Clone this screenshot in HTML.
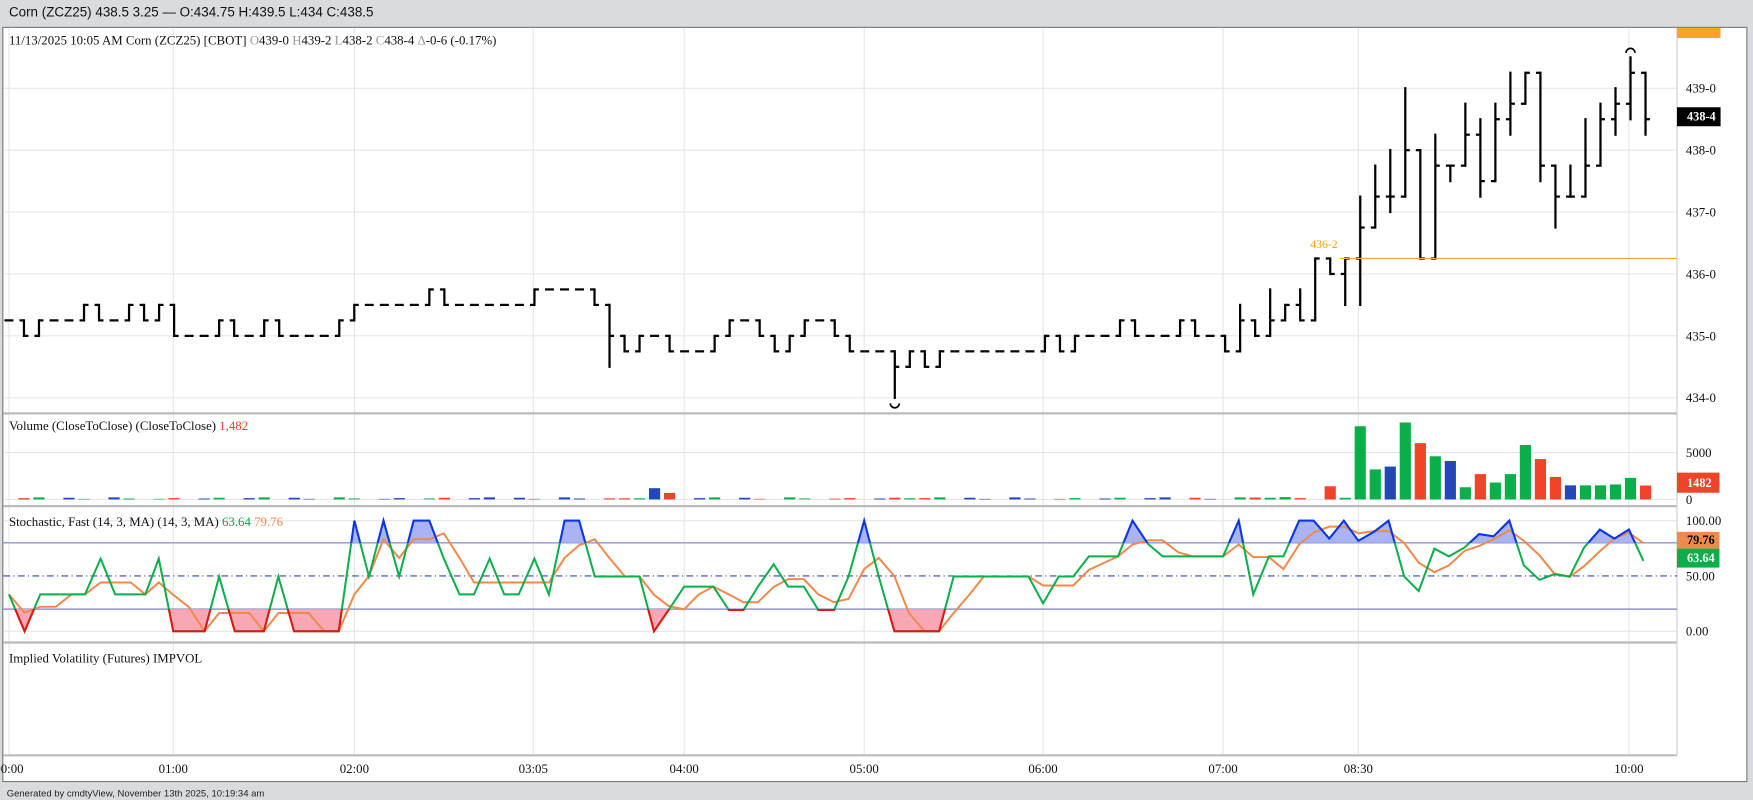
<!DOCTYPE html>
<html><head><meta charset="utf-8"><style>
html,body{margin:0;padding:0;background:#d9dcdf;overflow:hidden}
svg{display:block}
.s{font-family:"Liberation Serif",serif;font-size:11.5px;fill:#111}
</style></head><body>
<svg id="c" width="1753" height="800" viewBox="0 0 1568 716" preserveAspectRatio="none" xmlns="http://www.w3.org/2000/svg">
<rect x="0" y="0" width="1568" height="716" fill="#d9dcdf"/>
<text x="8" y="15" font-family="Liberation Sans,sans-serif" font-size="12" fill="#111">Corn (ZCZ25) 438.5 3.25 — O:434.75 H:439.5 L:434 C:438.5</text>
<rect x="2.5" y="24.5" width="1560" height="675" fill="#fff" stroke="#777" stroke-width="1"/>
<g id="grid"></g>
<g id="main"></g>
<text x="8" y="40" class="s" font-size="12">11/13/2025  10:05 AM Corn (ZCZ25) [CBOT] <tspan fill="#999">O</tspan>439-0 <tspan fill="#999">H</tspan>439-2 <tspan fill="#999">L</tspan>438-2 <tspan fill="#999">C</tspan>438-4 <tspan fill="#999">Δ</tspan>-0-6 (-0.17%)</text>
<text x="8" y="385" class="s" font-size="12">Volume (CloseToClose)  (CloseToClose) <tspan fill="#e8432a">1,482</tspan></text>
<text x="8" y="471" class="s" font-size="12">Stochastic, Fast (14, 3, MA)  (14, 3, MA) <tspan fill="#0aa24a">63.64</tspan> <tspan fill="#f08a4b">79.76</tspan></text>
<text x="8" y="593" class="s" font-size="12">Implied Volatility (Futures)  IMPVOL</text>
<text x="6" y="713" font-family="Liberation Sans,sans-serif" font-size="8.5" fill="#222">Generated by cmdtyView, November 13th 2025, 10:19:34 am</text>
</svg>
<script>
const NS="http://www.w3.org/2000/svg";
const G=document.getElementById('grid'),M=document.getElementById('main');
function el(p,t,a,txt){const e=document.createElementNS(NS,t);for(const k in a)e.setAttribute(k,a[k]);if(txt!=null)e.textContent=txt;p.appendChild(e);return e;}
const AX=1500;
const tl=[[8,"00:00"],[155,"01:00"],[317,"02:00"],[477,"03:05"],[612,"04:00"],[773,"05:00"],[933,"06:00"],[1094,"07:00"],[1215,"08:30"],[1457,"10:00"]];
tl.forEach(([x,t])=>{el(G,'line',{x1:x,y1:25,x2:x,y2:676,stroke:'#e6e6e6','stroke-width':1});el(G,'text',{x:x,y:692,'text-anchor':'middle',class:'s'},t);});
const py=p=>79+(439-p)*55.4;
[439,438,437,436,435,434].forEach(p=>{el(G,'line',{x1:3,y1:py(p),x2:AX,y2:py(p),stroke:'#e6e6e6'});el(G,'text',{x:AX+8,y:py(p)+4,class:'s'},p+"-0");});
[[370],[453],[575],[676]].forEach(([y])=>{el(G,'line',{x1:3,y1:y,x2:AX,y2:y,stroke:'#bbb','stroke-width':2});});
el(G,'line',{x1:AX,y1:25,x2:AX,y2:676,stroke:'#ccc'});
const vy=v=>447-v*42/5000;
el(G,'line',{x1:3,y1:vy(5000),x2:AX,y2:vy(5000),stroke:'#e6e6e6'});el(G,'line',{x1:3,y1:447,x2:AX,y2:447,stroke:'#e6e6e6'});
el(G,'text',{x:AX+8,y:vy(5000)+4,class:'s'},"5000");el(G,'text',{x:AX+8,y:451,class:'s'},"0");
const sy=v=>565-v*0.99;
el(G,'line',{x1:3,y1:sy(100),x2:AX,y2:sy(100),stroke:'#e6e6e6'});el(G,'line',{x1:3,y1:sy(0),x2:AX,y2:sy(0),stroke:'#e6e6e6'});
el(G,'line',{x1:3,y1:sy(80),x2:AX,y2:sy(80),stroke:'#8e93cc','stroke-width':1.3});
el(G,'line',{x1:3,y1:sy(20),x2:AX,y2:sy(20),stroke:'#8e93cc','stroke-width':1.3});
el(G,'line',{x1:3,y1:sy(50),x2:AX,y2:sy(50),stroke:'#3344bb','stroke-dasharray':'6,3,1,3'});
el(G,'text',{x:AX+8,y:sy(100)+4,class:'s'},"100.00");el(G,'text',{x:AX+8,y:sy(50)+4,class:'s'},"50.00");el(G,'text',{x:AX+8,y:sy(0)+4,class:'s'},"0.00");
const C=[435.25,435,435.25,435.25,435.25,435.5,435.25,435.25,435.5,435.25,435.5,
435,435,435,435.25,435,435,435.25,435,435,435,435,435.25,
435.5,435.5,435.5,435.5,435.5,435.75,435.5,435.5,435.5,435.5,435.5,435.5,
435.75,435.75,435.75,435.75,435.5,435,434.75,435,435,434.75,
434.75,434.75,435,435.25,435.25,435,434.75,435,435.25,435.25,435,434.75,
434.75,434.75,434.5,434.75,434.5,434.75,434.75,434.75,434.75,434.75,434.75,434.75,
435,434.75,435,435,435,435.25,435,435,435,435.25,435,435,
434.75,435.25,435,435.25,435.5,435.25,436.25,436,436.25,
436.75,437.25,437.25,438,436.25,437.75,437.75,438.25,437.5,438.5,438.75,439.25,437.75,437.25,437.25,437.75,438.5,438.75,439.25,438.5];
const HL={40:[null,434.5],59:[null,434],82:[435.5,434.75],84:[435.75,null],86:[435.75,null],89:[436.25,435.5],90:[437.25,435.5],91:[437.75,null],92:[438,437],93:[439,null],94:[null,436.25],95:[438.25,null],96:[null,437.5],97:[438.75,null],98:[438.5,437.25],99:[438.75,null],100:[439.25,438.25],101:[439.25,null],102:[439.25,437.5],103:[null,436.75],104:[437.75,null],105:[438.5,437.25],106:[438.75,null],107:[439,438.25],108:[439.5,438.5],109:[439.25,438.25]};
const bx=i=>8+13.43*i;
const T=4;
C.forEach((c,i)=>{const o=i?C[i-1]:c;let h=Math.max(o,c),l=Math.min(o,c);if(HL[i]){if(HL[i][0]!=null)h=Math.max(h,HL[i][0]);if(HL[i][1]!=null)l=Math.min(l,HL[i][1]);}
const x=bx(i);
if(h>l)el(M,'line',{x1:x,y1:py(h)-1,x2:x,y2:py(l)+1,stroke:'#000','stroke-width':2});
el(M,'line',{x1:x-T,y1:py(o),x2:x,y2:py(o),stroke:'#000','stroke-width':2});
el(M,'line',{x1:x,y1:py(c),x2:x+T,y2:py(c),stroke:'#000','stroke-width':2});});
el(M,'path',{d:`M${bx(59)-4},${py(434)+5} a4,4 0 0 0 8,0`,fill:'none',stroke:'#000','stroke-width':1.5});
el(M,'path',{d:`M${bx(108)-4},${py(439.5)-4} a4,4 0 0 1 8,0`,fill:'none',stroke:'#000','stroke-width':1.5});
el(M,'line',{x1:bx(89)-5,y1:py(436.25),x2:AX,y2:py(436.25),stroke:'#f5a623','stroke-width':1});
el(M,'text',{x:1172,y:222,'font-family':'Liberation Serif,serif','font-size':10.5,fill:'#f5a000'},"436-2");
el(M,'rect',{x:AX,y:25,width:39,height:9,fill:'#f5a623'});
el(M,'rect',{x:AX,y:96,width:39,height:17,fill:'#000'});
el(M,'text',{x:AX+9,y:108,'font-family':'Liberation Serif,serif','font-size':11,'font-weight':'bold',fill:'#fff'},"438-4");
const V={55:80,60:120,83:200,84:180,85:250,88:1400,89:180,90:7800,91:3200,92:3500,93:8200,94:6000,95:4600,96:4100,97:1300,98:2700,99:1800,100:2700,101:5800,102:4300,103:2400,104:1500,105:1500,106:1500,107:1600,108:2300,109:1482,43:1200,44:700};
C.forEach((c,i)=>{if(i==0)return;let v=V[i]!=null?V[i]:(i%3==0?0:(60+((i*37)%5)*40));if(i>=40&&i<=44&&V[i]==null)v=120;
if(!v)return;const o=C[i-1];const col=c>o?'#0aaf4a':c<o?'#f0432a':'#2248b8';
el(M,'rect',{x:bx(i)-5,y:vy(v),width:10,height:447-vy(v),fill:col});});
el(M,'rect',{x:AX,y:423,width:38,height:18,fill:'#f0432a'});
el(M,'text',{x:AX+9,y:436,'font-family':'Liberation Serif,serif','font-size':11,'font-weight':'bold',fill:'#fff'},"1482");
const gp=[[8,532],[22,565],[36,532],[50,532],[64,532],[76,532],[90,500],[103,532],[117,532],[130,532],[142,500],[155,565],[169,565],[183,565],[196,516],[210,565],[223,565],[236,565],[249,516],[263,565],[276,565],[290,565],[303,565],[317,466],[330,516],[343,466],[357,516],[370,466],[384,466],[397,500],[411,532],[424,532],[438,500],[451,532],[464,532],[478,500],[491,532],[505,466],[518,466],[532,516],[545,516],[559,516],[572,516],[585,565],[598,546],[612,525],[625,525],[638,525],[652,546],[665,546],[678,525],[692,505],[705,525],[719,525],[732,546],[746,546],[759,516],[773,466],[786,516],[800,565],[813,565],[827,565],[840,565],[853,516],[867,516],[880,516],[893,516],[907,516],[920,516],[933,540],[947,516],[960,516],[974,498],[987,498],[1000,498],[1013,466],[1027,487],[1040,498],[1054,498],[1067,498],[1081,498],[1094,498],[1108,466],[1121,532],[1135,498],[1148,498],[1162,466],[1175,466],[1189,482],[1202,466],[1215,484],[1229,476],[1242,466],[1256,516],[1269,529],[1283,491],[1296,498],[1310,490],[1323,478],[1336,480],[1350,466],[1363,506],[1377,519],[1390,514],[1404,516],[1417,490],[1431,474],[1444,482],[1457,474],[1470,502]];
const pts=gp.map(p=>p.join(',')).join(' ');
const defs=el(document.getElementById('c'),'defs',{});
const c1=el(defs,'clipPath',{id:'lo'});el(c1,'rect',{x:0,y:sy(20),width:1500,height:40});
const c2=el(defs,'clipPath',{id:'hi'});el(c2,'rect',{x:0,y:450,width:1500,height:sy(80)-450});
const S=el(M,'g',{});
el(S,'polygon',{points:`8,${sy(20)} ${pts} 1470,${sy(20)}`,fill:'#f7a8b4','clip-path':'url(#lo)'});
el(S,'polygon',{points:`8,${sy(80)} ${pts} 1470,${sy(80)}`,fill:'#aab4f5','clip-path':'url(#hi)'});
const op=gp.map((p,i)=>{const a=gp.slice(Math.max(0,i-2),i+1);return [p[0],a.reduce((s,q)=>s+q[1],0)/a.length];});
el(S,'polyline',{points:op.map(p=>p.join(',')).join(' '),fill:'none',stroke:'#f08a4b','stroke-width':1.8});
el(S,'polyline',{points:pts,fill:'none',stroke:'#0aaf4a','stroke-width':1.8});
el(S,'polyline',{points:pts,fill:'none',stroke:'#ee1111','stroke-width':1.8,'clip-path':'url(#lo)'});
el(S,'polyline',{points:pts,fill:'none',stroke:'#1133ee','stroke-width':1.8,'clip-path':'url(#hi)'});
el(M,'rect',{x:AX,y:476,width:38,height:15,fill:'#f08a4b'});
el(M,'text',{x:AX+9,y:487,'font-family':'Liberation Serif,serif','font-size':11,'font-weight':'bold',fill:'#000'},"79.76");
el(M,'rect',{x:AX,y:491,width:38,height:17,fill:'#0aaf4a'});
el(M,'text',{x:AX+9,y:503,'font-family':'Liberation Serif,serif','font-size':11,'font-weight':'bold',fill:'#fff'},"63.64");
</script>
</body></html>
